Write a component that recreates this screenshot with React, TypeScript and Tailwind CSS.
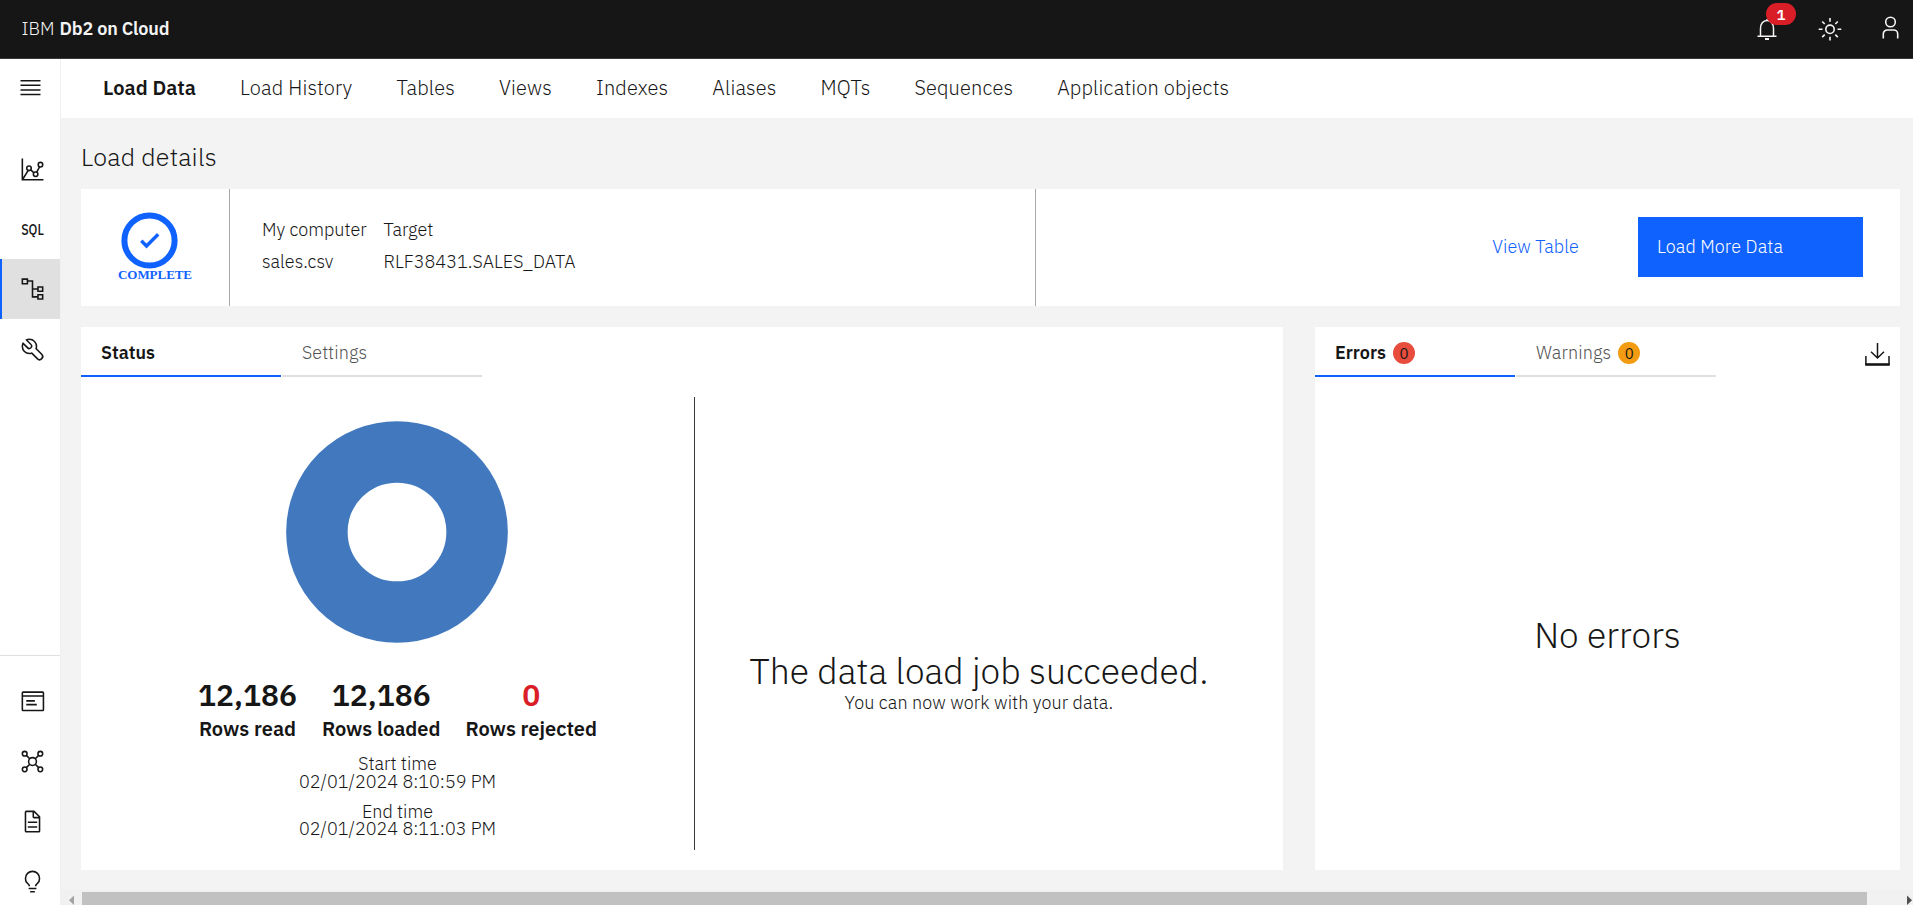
import type { ReactNode } from "react";

function Icon({ children }: { children: ReactNode }) {
  return (
    <svg viewBox="0 0 32 32" className="size-[25px] shrink-0" fill="#161616">
      {children}
    </svg>
  );
}

function NavCell({ children, active = false }: { children: ReactNode; active?: boolean }) {
  return (
    <div
      className={
        active
          ? "flex h-[60px] w-[60px] items-center border-l-2 border-[#0f62fe] bg-[#e0e0e0] pb-px pl-[18px]"
          : "flex h-[60px] w-[60px] items-center pl-5"
      }
    >
      {children}
    </div>
  );
}

function Sidebar() {
  return (
    <aside className="flex w-[61px] shrink-0 flex-col border-r border-[#f0f0f0] bg-white">
      <div className="flex h-20 items-start pl-5 pt-[21px]">
        <svg width="21" height="16" viewBox="0 0 21 16" fill="#161616">
          <path d="M.5 0h20v1.5H.5zM.5 4.6h20v1.500H.5zM.5 9.2h20v1.500H.5zM.5 13.8h20v1.500H.5z" />
        </svg>
      </div>
      <NavCell>
        <Icon>
          <g fill="none" stroke="#161616" strokeWidth="2">
            <path d="M3 2v27h27M3.5 28.5l7-11.4M13.4 16.2l4.5 4.2M21.2 19.6l4-7.3" />
            <circle cx="11.5" cy="14.5" r="2.9" />
            <circle cx="20" cy="22" r="2.9" />
            <circle cx="26.2" cy="9.8" r="2.9" />
          </g>
        </Icon>
      </NavCell>
      <NavCell>
        <svg viewBox="0 0 32 32" className="size-[25px] shrink-0 overflow-visible font-['IBM_Plex_Sans','Roboto',sans-serif]" fill="#161616">
          <text x="1.5" y="22.8" fontSize="20" fontWeight="500" textLength="29" lengthAdjust="spacingAndGlyphs">
            SQL
          </text>
        </svg>
      </NavCell>
      <NavCell active>
        <Icon>
          <g fill="none" stroke="#161616" strokeWidth="2">
            <path d="M3 4h6.5v6H3zM23 14h6v5.5h-6zM23 24h6v5.5h-6zM9.5 6.5H16v20.200h7M16 16.700h7" />
          </g>
        </Icon>
      </NavCell>
      <NavCell>
        <Icon>
          <path d="M12.100 2a9.800 9.800 0 0 0-5.400 1.600l6.400 6.400a2.100 2.100 0 0 1 .2 3 2.100 2.100 0 0 1-3-.2L3.700 6.400A9.840 9.840 0 0 0 2 12.100 10.140 10.140 0 0 0 12.100 22.200a10.900 10.900 0 0 0 2.600-.3l6.700 6.700a5 5 0 0 0 7.100-7.100l-6.700-6.700a10.900 10.900 0 0 0 .3-2.600A10 10 0 0 0 12.100 2Zm8 10.100a7.610 7.610 0 0 1-.3 2.100l-.3 1.100.8.8 6.700 6.700a2.880 2.880 0 0 1 .9 2.100A2.720 2.720 0 0 1 27 27a2.900 2.900 0 0 1-4.200 0l-6.700-6.700-.8-.8-1.100.3a7.610 7.610 0 0 1-2.100.3 8.270 8.270 0 0 1-5.700-2.300A7.630 7.630 0 0 1 4 12.100a8.330 8.330 0 0 1 .3-2.200l4.400 4.400a4.140 4.140 0 0 0 5.900.2 4.140 4.140 0 0 0-.2-5.900L10 4.200a6.450 6.450 0 0 1 2-.3 8.270 8.270 0 0 1 5.700 2.300A8.490 8.490 0 0 1 20.100 12.100Z" />
        </Icon>
      </NavCell>
      <div className="mt-auto h-[250px] overflow-hidden border-t border-[#e0e0e0] pt-[15px]">
        <NavCell>
          <Icon>
            <g fill="none" stroke="#161616" strokeWidth="2">
              <rect x="3" y="4" width="27" height="23.500" rx="1" />
              <path d="M3 9h27M8 15.200h11M8 20h13.500" />
            </g>
          </Icon>
        </NavCell>
        <NavCell>
          <Icon>
            <g fill="none" stroke="#161616" strokeWidth="2">
              <circle cx="16" cy="16" r="5" />
              <circle cx="6" cy="6" r="3" />
              <circle cx="26" cy="6" r="3" />
              <circle cx="6" cy="26" r="3" />
              <circle cx="26" cy="26" r="3" />
              <path d="M8.100 8.100l4.400 4.400M23.900 8.100l-4.400 4.400M8.100 23.900l4.400-4.400M23.900 23.900l-4.400-4.400" />
            </g>
          </Icon>
        </NavCell>
        <NavCell>
          <Icon>
            <path d="M25.700 9.300l-7-7A1 1 0 0 0 18 2H8a2 2 0 0 0-2 2v24a2 2 0 0 0 2 2h16a2 2 0 0 0 2-2V10a1 1 0 0 0-.3-.7ZM18 4.400l5.600 5.600H18ZM24 28H8V4h8v6a2 2 0 0 0 2 2h6Z" />
            <path d="M10 22h12v2H10zM10 16h12v2H10z" />
          </Icon>
        </NavCell>
        <NavCell>
          <Icon>
            <path d="M11 24h10v2H11zM13 28h6v2h-6z" />
            <path d="M16 2A10 10 0 0 0 6 12a9.190 9.190 0 0 0 3.460 7.620c1 .93 1.540 1.460 1.540 2.380h2c0-1.840-1.110-2.870-2.190-3.860A7.200 7.200 0 0 1 8 12a8 8 0 0 1 16 0 7.200 7.200 0 0 1-2.820 6.140c-1.070 1-2.180 2-2.180 3.860h2c0-.92.53-1.450 1.540-2.390A9.180 9.180 0 0 0 26 12 10 10 0 0 0 16 2Z" />
          </Icon>
        </NavCell>
      </div>
    </aside>
  );
}

function Header() {
  return (
    <header className="flex h-[59px] shrink-0 items-center justify-between border-b border-[#393939] bg-[#161616] pl-[21.5px] text-[18px] leading-6 text-[#f4f4f4]">
      <div className="flex gap-[5px] whitespace-nowrap">
        <span>IBM</span>
        <span className="font-semibold tracking-[-0.15px]">Db2 on Cloud</span>
      </div>
      <div className="flex h-full items-start">
        <div className="relative mr-[41px] mt-[17px]">
          <svg width="20" height="25" viewBox="0 0 20 25" fill="none" stroke="#f4f4f4" strokeWidth="1.500">
            <path d="M3.500 19V11.500c0-4.500 2.500-8 6.500-8s6.500 3.500 6.500 8V19M.5 19.300h19M10 3.500V2" />
            <path d="M8 22h4" strokeWidth="2" />
          </svg>
          <span className="absolute -top-[14px] left-[9px] flex h-[22px] w-[30px] items-center justify-center rounded-full bg-[#da1e28] text-[15px] font-semibold leading-none text-white">
            1
          </span>
        </div>
        <svg width="24" height="24" viewBox="0 0 24 24" className="mr-[40px] mt-[17px]" fill="none" stroke="#f4f4f4" strokeWidth="1.600">
          <circle cx="12" cy="12.300" r="4.200" />
          <path d="M12 1v3.800M12 19.800v3.800M.7 12.300h3.800M19.500 12.300h3.800M4.200 4.500l2.500 2.500M17.300 17.600l2.500 2.500M4.200 20.100l2.500-2.500M17.300 7l2.500-2.500" />
        </svg>
        <svg width="17" height="24" viewBox="0 0 17 24" className="mr-[14px] mt-[16px]" fill="none" stroke="#f4f4f4" strokeWidth="1.600">
          <circle cx="8.500" cy="6" r="4.800" />
          <path d="M1.300 22.500V18a4 4 0 0 1 4-4h6.400a4 4 0 0 1 4 4v4.500" />
        </svg>
      </div>
    </header>
  );
}

const sections = ["Load History", "Tables", "Views", "Indexes", "Aliases", "MQTs", "Sequences", "Application objects"];

function Tab({ children, active = false }: { children: ReactNode; active?: boolean }) {
  return (
    <div
      className={
        active
          ? "flex h-[50px] w-[200px] items-center border-b-2 border-[#0f62fe] pl-5 pt-[3px] font-semibold text-[#161616]"
          : "flex h-[50px] w-[200px] items-center border-b-2 border-[#e0e0e0] pl-5 pt-[3px] tracking-[0.1px] text-[#525252]"
      }
    >
      {children}
    </div>
  );
}

function Stat({ value, label, danger = false }: { value: string; label: string; danger?: boolean }) {
  return (
    <div className="flex flex-col items-center font-semibold">
      <span className={danger ? "text-[30px] leading-9 text-[#da1e28]" : "text-[30px] leading-9"}>{value}</span>
      <span className="mt-[3px] text-[20px] leading-[26px]">{label}</span>
    </div>
  );
}

function SummaryCard() {
  return (
    <section className="flex h-[117px] shrink-0 bg-white">
      <div className="flex w-[149px] flex-col items-center border-r border-[#a8a8a8] pl-0.5 pt-[23px]">
        <svg width="57" height="57" viewBox="0 0 57 57" className="mr-[14px]" fill="none" stroke="#0f62fe">
          <circle cx="28.500" cy="28.500" r="25.100" strokeWidth="6" />
          <path d="M20.300 28.800l5.200 5.200 11.700-11.700" strokeWidth="3.400" />
        </svg>
        <span className="-mt-px mr-[2px] font-['Liberation_Serif',serif] text-[13px] font-bold leading-[14px] tracking-[-0.050px] text-[#0f62fe]">
          COMPLETE
        </span>
      </div>
      <div className="grid w-[806px] grid-cols-[121.500px_auto] content-start justify-start border-r border-[#a8a8a8] pl-8 pt-[25px] leading-8 tracking-[0.010px]">
        <span>My computer</span>
        <span>Target</span>
        <span>sales.csv</span>
        <span>RLF38431.SALES_DATA</span>
      </div>
      <div className="flex grow items-center justify-end pr-[37px] tracking-[0.1px]">
        <a className="mb-0.5 mr-[59px] text-[#0f62fe]">View Table</a>
        <button className="mb-px h-[60px] w-[225px] bg-[#0f62fe] pb-0.5 pl-[19px] text-left tracking-[0.1px] text-white">Load More Data</button>
      </div>
    </section>
  );
}

function StatusPanel() {
  return (
    <section className="flex w-[1202px] shrink-0 flex-col bg-white">
      <div className="flex gap-px">
        <Tab active>Status</Tab>
        <Tab>Settings</Tab>
      </div>
      <div className="flex grow pb-5 pt-5">
        <div className="flex w-[614px] flex-col items-center border-r border-[#393939] pl-[18px] pt-6">
          <svg width="222" height="222" viewBox="0 0 222 222" className="shrink-0">
            <circle cx="111" cy="111" r="80.100" fill="none" stroke="#4178be" strokeWidth="61.500" />
          </svg>
          <div className="ml-0.5 mt-[34px] flex gap-[25px]">
            <Stat value="12,186" label="Rows read" />
            <Stat value="12,186" label="Rows loaded" />
            <Stat value="0" label="Rows rejected" danger />
          </div>
          <div className="ml-0.5 mt-[13px] flex flex-col items-center leading-[17.500px]">
            <span>Start time</span>
            <span>02/01/2024 8:10:59 PM</span>
            <span className="mt-[12.500px]">End time</span>
            <span>02/01/2024 8:11:03 PM</span>
          </div>
        </div>
        <div className="flex grow flex-col items-center pr-[20px] pt-[250px]">
          <p className="text-[35.500px] leading-[48px]">The data load job succeeded.</p>
          <p className="-mt-1 leading-6 tracking-[0.100px]">You can now work with your data.</p>
        </div>
      </div>
    </section>
  );
}

function ErrorsPanel() {
  return (
    <section className="flex grow flex-col bg-white">
      <div className="flex gap-px">
        <Tab active>
          Errors
          <span className="ml-[7px] mt-px flex size-[22px] items-center justify-center rounded-full bg-[#e74c3c] text-[15px] font-normal leading-none">
            0
          </span>
        </Tab>
        <Tab>
          Warnings
          <span className="ml-[7px] mt-px flex size-[22px] items-center justify-center rounded-full bg-[#f39c12] text-[15px] font-normal leading-none text-[#161616]">
            0
          </span>
        </Tab>
        <svg width="25" height="24" viewBox="0 0 25 24" className="ml-auto mr-[10px] mt-[16px]" fill="none" stroke="#161616" strokeWidth="1.500">
          <path d="M12.500 0v14.800M6 8.700l6.500 6.300L19 8.700M.9 13v9M24 13v9" />
          <path d="M.2 21.500h24.500" strokeWidth="2.600" />
        </svg>
      </div>
      <p className="mt-[234px] text-center text-[35.500px] leading-[48px]">No errors</p>
    </section>
  );
}

function ScrollBar() {
  return (
    <div className="flex h-[15px] shrink-0 items-end justify-between bg-[#f1f1f1] pl-2">
      <svg width="5" height="10" viewBox="0 0 5 10" fill="#a3a3a3">
        <path d="M5 .5v9.500L0 5.200z" />
      </svg>
      <div className="ml-2 h-[13px] w-[1785px] bg-[#c1c1c1]" />
      <svg width="5" height="10" viewBox="0 0 5 10" className="ml-auto mr-px" fill="#505050">
        <path d="M0 .5v9.500l5-4.800z" />
      </svg>
    </div>
  );
}

export default function App() {
  return (
    <div className="flex h-[905px] w-[1913px] flex-col overflow-hidden bg-[#f3f3f3] font-['IBM_Plex_Sans','Roboto',sans-serif] text-[18px] font-light text-[#161616]">
      <Header />
      <div className="flex min-h-0 grow">
        <Sidebar />
        <div className="flex min-w-0 grow flex-col">
          <nav className="flex h-[59px] shrink-0 items-center gap-[44.100px] whitespace-nowrap bg-white pb-0.5 pl-[42px] text-[20px] tracking-[0.150px]">
            <span className="font-semibold tracking-normal">Load Data</span>
            {sections.map((name) => (
              <span key={name}>{name}</span>
            ))}
          </nav>
          <main className="flex min-h-0 grow flex-col pl-5 pr-[13px]">
            <h1 className="h-[71px] shrink-0 pt-[21px] text-[25px] leading-9 tracking-[0.200px]">Load details</h1>
            <SummaryCard />
            <div className="mb-5 mt-[21px] flex min-h-0 grow gap-8">
              <StatusPanel />
              <ErrorsPanel />
            </div>
          </main>
          <ScrollBar />
        </div>
      </div>
    </div>
  );
}
